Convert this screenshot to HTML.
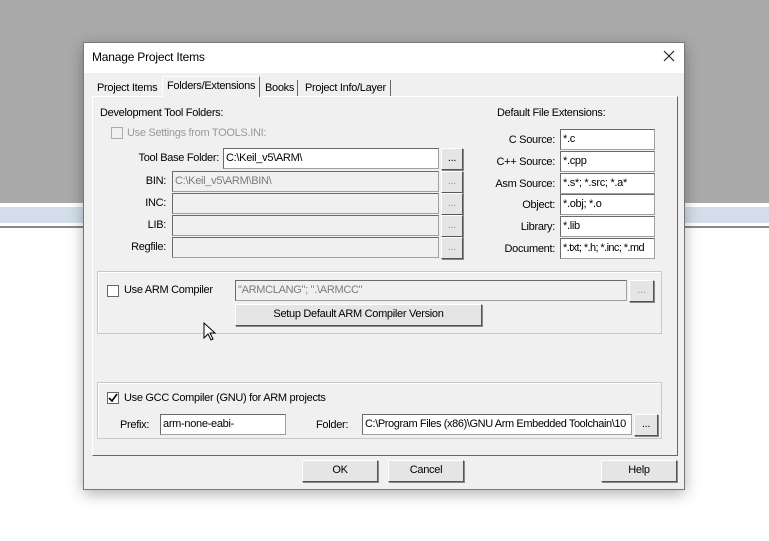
<!DOCTYPE html>
<html><head><style>
*{margin:0;padding:0;box-sizing:border-box}
body{width:769px;height:541px;position:relative;overflow:hidden;background:#fff;font-family:"Liberation Sans",Arial,sans-serif;font-size:11px;letter-spacing:-0.3px;color:#000}
.a{position:absolute;white-space:nowrap}
.in{position:absolute;background:#fff;border:1px solid #a0a0a0;border-top-color:#6a6a6a;border-left-color:#6a6a6a;height:21px;padding:3px 2px;white-space:nowrap;overflow:hidden}
.dis{background:#f0f0f0;color:#7a7a7a}
.bt{position:absolute;background:#e5e5e5;border:1px solid #fff;border-right-color:#555;border-bottom-color:#555;box-shadow:1px 1px 0 #888;text-align:center;line-height:19px;height:22px}
.r{position:absolute;text-align:right;width:90px;white-space:nowrap}
.cb{position:absolute;width:12px;height:12px;border:1px solid #666;background:#fff}
.grp{position:absolute;border:1px solid #c8c8c8;box-shadow:inset 1px 1px 0 #fff}
</style></head><body>
<div class="a" style="left:0;top:0;width:769px;height:203px;background:#a9a9a9"></div>
<div class="a" style="left:0;top:207px;width:769px;height:16px;background:#d3deea"></div>
<div class="a" style="left:0;top:226px;width:769px;height:2px;background:#888"></div>

<div class="a" style="left:83px;top:42px;width:602px;height:448px;background:#f0f0f0;border:1px solid #777;box-shadow:0 4px 14px rgba(0,0,0,.3)"></div>
<div class="a" style="left:84px;top:43px;width:600px;height:30px;background:#fff"></div>
<div class="a" style="left:92px;top:50px;font-size:12px;letter-spacing:-0.2px">Manage Project Items</div>
<svg class="a" style="left:663px;top:50px" width="12" height="12"><path d="M1 1L11 11M11 1L1 11" stroke="#222" stroke-width="1.2"/></svg>

<div class="a" style="left:92px;top:96px;width:586px;height:360px;border:1px solid #fff;border-right-color:#666;border-bottom-color:#666"></div>
<div class="a" style="left:97px;top:82px">Project Items</div>
<div class="a" style="left:162px;top:76px;width:98px;height:21px;background:#f0f0f0;border:1px solid #fff;border-bottom:none;border-right:1px solid #666"></div>
<div class="a" style="left:167px;top:80px">Folders/Extensions</div>
<div class="a" style="left:265px;top:82px">Books</div>
<div class="a" style="left:297px;top:80px;width:1px;height:16px;background:#666"></div>
<div class="a" style="left:305px;top:82px">Project Info/Layer</div>
<div class="a" style="left:390px;top:80px;width:1px;height:16px;background:#666"></div>

<div class="a" style="left:100px;top:107px">Development Tool Folders:</div>
<div class="cb" style="left:111px;top:127px;border-color:#aaa;background:#f0f0f0"></div>
<div class="a" style="left:127px;top:127px;color:#999">Use Settings from TOOLS.INI:</div>

<div class="r" style="left:129px;top:152px">Tool Base Folder:</div>
<div class="in" style="left:223px;top:148px;width:216px">C:\Keil_v5\ARM\</div>
<div class="r" style="left:76px;top:175px">BIN:</div>
<div class="in dis" style="left:172px;top:171px;width:267px">C:\Keil_v5\ARM\BIN\</div>
<div class="r" style="left:76px;top:197px">INC:</div>
<div class="in dis" style="left:172px;top:193px;width:267px"></div>
<div class="r" style="left:76px;top:219px">LIB:</div>
<div class="in dis" style="left:172px;top:215px;width:267px"></div>
<div class="r" style="left:76px;top:241px">Regfile:</div>
<div class="in dis" style="left:172px;top:237px;width:267px"></div>
<div class="bt" style="left:441px;top:148px;width:22px">...</div>
<div class="bt" style="left:441px;top:171px;width:22px;color:#999">...</div>
<div class="bt" style="left:441px;top:193px;width:22px;color:#999">...</div>
<div class="bt" style="left:441px;top:215px;width:22px;color:#999">...</div>
<div class="bt" style="left:441px;top:237px;width:22px;color:#999">...</div>

<div class="a" style="left:497px;top:107px">Default File Extensions:</div>
<div class="r" style="left:465px;top:134px">C Source:</div>
<div class="in" style="left:560px;top:129px;width:95px">*.c</div>
<div class="r" style="left:465px;top:156px">C++ Source:</div>
<div class="in" style="left:560px;top:151px;width:95px">*.cpp</div>
<div class="r" style="left:465px;top:178px">Asm Source:</div>
<div class="in" style="left:560px;top:173px;width:95px">*.s*; *.src; *.a*</div>
<div class="r" style="left:465px;top:199px">Object:</div>
<div class="in" style="left:560px;top:194px;width:95px">*.obj; *.o</div>
<div class="r" style="left:465px;top:221px">Library:</div>
<div class="in" style="left:560px;top:216px;width:95px">*.lib</div>
<div class="r" style="left:465px;top:243px">Document:</div>
<div class="in" style="left:560px;top:238px;width:95px;letter-spacing:-0.6px">*.txt; *.h; *.inc; *.md</div>

<div class="grp" style="left:97px;top:271px;width:565px;height:63px"></div>
<div class="cb" style="left:107px;top:285px"></div>
<div class="a" style="left:124px;top:284px">Use ARM Compiler</div>
<div class="in dis" style="left:235px;top:280px;width:392px">"ARMCLANG"; ".\ARMCC"</div>
<div class="bt" style="left:629px;top:280px;width:25px;color:#999">...</div>
<div class="bt" style="left:235px;top:304px;width:247px">Setup Default ARM Compiler Version</div>
<svg class="a" style="left:203px;top:322px" width="14" height="20"><path d="M1 1L1 16L5 12L8 18L10 17L7 11L12 11Z" fill="#fff" stroke="#000" stroke-width="1"/></svg>

<div class="grp" style="left:97px;top:382px;width:565px;height:57px"></div>
<div class="cb" style="left:107px;top:392px"></div>
<svg class="a" style="left:108px;top:393px" width="10" height="10"><path d="M1 5L4 8L9 1" stroke="#000" stroke-width="1.6" fill="none"/></svg>
<div class="a" style="left:124px;top:392px">Use GCC Compiler (GNU) for ARM projects</div>
<div class="a" style="left:120px;top:419px">Prefix:</div>
<div class="in" style="left:160px;top:414px;width:126px">arm-none-eabi-</div>
<div class="a" style="left:316px;top:419px">Folder:</div>
<div class="in" style="left:362px;top:414px;width:270px;letter-spacing:-0.4px">C:\Program Files (x86)\GNU Arm Embedded Toolchain\10</div>
<div class="bt" style="left:634px;top:414px;width:24px">...</div>

<div class="bt" style="left:302px;top:460px;width:76px">OK</div>
<div class="bt" style="left:388px;top:460px;width:76px">Cancel</div>
<div class="bt" style="left:601px;top:460px;width:76px">Help</div>
</body></html>
